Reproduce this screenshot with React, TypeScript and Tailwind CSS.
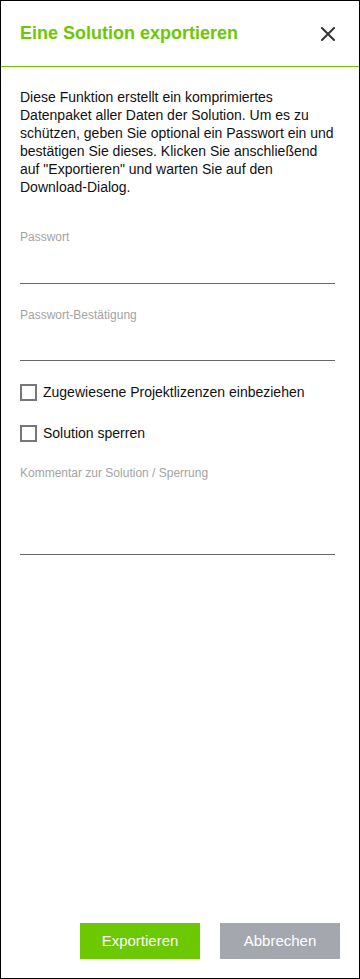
// App.tsx
import { useState } from 'react'

function CloseIcon() {
	return (
		<svg width="14" height="14" viewBox="0 0 14 14" fill="none">
			<path d="M1 1L13 13M13 1L1 13" stroke="#333333" strokeWidth="2" strokeLinecap="square" />
		</svg>
	)
}

function Field({ label, height, className = '' }: { label: string; height: string; className?: string }) {
	return (
		<div className={className}>
			<label className="block text-[12px] leading-[14px] text-[#a3a3a3]">{label}</label>
			<div className={`${height} border-b border-[#666666]`} />
		</div>
	)
}

function Checkbox({ label, className = '' }: { label: string; className?: string }) {
	const [ checked, setChecked ] = useState(false)
	return (
		<button
			onClick={() => setChecked(!checked)}
			className={`flex items-center gap-[6px] h-[18px] text-left ${className}`}
		>
			<span className="w-[17px] h-[17px] border-2 border-[#777777] bg-white flex items-center justify-center">
				{checked && <span className="w-[9px] h-[9px] bg-[#6cc800]" />}
			</span>
			<span className="text-[14px] leading-[18px] text-[#111111]">{label}</span>
		</button>
	)
}

export default function App() {
	return (
		<div className="w-[360px] h-[979px] border border-black bg-white flex flex-col font-['Liberation_Sans',Arial,sans-serif]">
			{/* Header */}
			<header className="h-[66px] shrink-0 border-b border-[#6cc800] flex items-center justify-between pl-[19px] pr-[24px]">
				<h1 className="text-[18px] font-bold text-[#6cc800]">Eine Solution exportieren</h1>
				<button className="p-0">
					<CloseIcon />
				</button>
			</header>

			{/* Body */}
			<div className="pl-[19px] pr-[24px] pt-[21px]">
				<p className="text-[14px] leading-[18px] text-[#111111]">
					Diese Funktion erstellt ein komprimiertes Datenpaket aller Daten der Solution. Um es zu schützen, geben Sie optional ein Passwort ein und bestätigen Sie dieses. Klicken Sie anschließend auf "Exportieren" und warten Sie auf den Download-Dialog.
				</p>

				<Field label="Passwort" height="h-[40px]" className="mt-[34px]" />
				<Field label="Passwort-Bestätigung" height="h-[39px]" className="mt-[24px]" />

				<Checkbox label="Zugewiesene Projektlizenzen einbeziehen" className="mt-[22px]" />
				<Checkbox label="Solution sperren" className="mt-[23px]" />

				<Field label="Kommentar zur Solution / Sperrung" height="h-[75px]" className="mt-[24px]" />
			</div>

			{/* Footer */}
			<div className="mt-auto flex justify-end gap-[20px] pr-[19px] pb-[19px]">
				<button className="w-[120px] h-[36px] bg-[#6cc800] text-white text-[15px]">Exportieren</button>
				<button className="w-[120px] h-[36px] bg-[#a4a7ae] text-white text-[15px]">Abbrechen</button>
			</div>
		</div>
	)
}
